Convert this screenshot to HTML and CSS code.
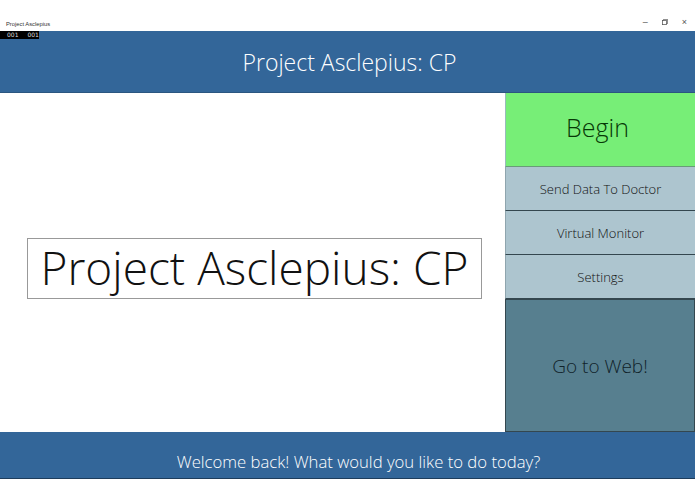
FILE: index.html
```html
<!DOCTYPE html>
<html lang="en">
<head>
    <meta charset="UTF-8">
    <meta name="viewport" content="width=device-width, initial-scale=1.0">
    <title>Project Asclepius</title>
    <link rel="stylesheet" href="styles.css">
</head>
<body>
    <div class="titlebar">
        <span class="window-title">Project Asclepius</span>
        <div class="window-controls">
            <span class="ctrl">&#8211;</span>
            <svg class="ctrl-icon" width="8" height="8" viewBox="0 0 8 8">
                <rect x="0.5" y="2" width="5.5" height="5.5" fill="none" stroke="#555" stroke-width="1"/>
                <path d="M2 2 V0.5 H7.5 V6 H6" fill="none" stroke="#555" stroke-width="1"/>
            </svg>
            <span class="ctrl">&#215;</span>
        </div>
    </div>

    <div class="app">
        <div class="fps">
            <span>001</span>
            <span>001</span>
        </div>

        <header class="app-header">
            <h1>Project Asclepius: CP</h1>
        </header>

        <main class="content">
            <section class="stage">
                <div class="title-box">Project Asclepius: CP</div>
            </section>

            <nav class="menu">
                <button class="btn btn-begin">Begin</button>
                <button class="btn btn-option">Send Data To Doctor</button>
                <button class="btn btn-option">Virtual Monitor</button>
                <button class="btn btn-option">Settings</button>
                <button class="btn btn-web">Go to Web!</button>
            </nav>
        </main>

        <footer class="app-footer">
            <p>Welcome back! What would you like to do today?</p>
        </footer>
    </div>
</body>
</html>
```

FILE: styles.css
```css
:root {
    --primary-color: #336699;
    --begin-color: #77ee77;
    --option-color: #adc5cf;
    --web-color: #577f8f;
    --line-color: #34474f;
    --text-dark: #111;
}

* {
    margin: 0;
    padding: 0;
    box-sizing: border-box;
}

body {
    font-family: 'Open Sans', 'Noto Sans', sans-serif;
    font-weight: 300;
    background-color: white;
    color: var(--text-dark);
    width: 695px;
    height: 494px;
    overflow: hidden;
}

.titlebar {
    height: 31px;
    display: flex;
    justify-content: space-between;
    align-items: flex-end;
    padding: 0 8px 4px 6px;
    font-family: 'Liberation Sans', sans-serif;
    font-weight: 400;
}

.window-title {
    font-size: 5.8px;
    color: #333;
}

.window-controls {
    display: flex;
    align-items: center;
    gap: 14px;
    color: #555;
}

.ctrl {
    font-size: 9px;
}

.ctrl-icon {
    width: 6px;
    height: 6px;
}

.app {
    position: relative;
    display: flex;
    flex-direction: column;
}

.fps {
    position: absolute;
    top: 0;
    left: 0;
    width: 39px;
    height: 8px;
    background-color: #000;
    color: #ddd;
    font-family: 'DejaVu Sans', sans-serif;
    font-weight: 400;
    font-size: 6px;
    line-height: 8px;
    display: flex;
    gap: 9px;
    padding-left: 7px;
}

.app-header {
    height: 62px;
    background-color: var(--primary-color);
    border-bottom: 1px solid #2b5680;
    display: flex;
    align-items: center;
    justify-content: center;
}

.app-header h1 {
    font-size: 23px;
    font-weight: 300;
    color: white;
    padding-left: 4px;
}

.content {
    height: 339px;
    display: flex;
}

.stage {
    flex: 1;
    display: flex;
    align-items: center;
    justify-content: center;
    padding-top: 11px;
    padding-left: 4px;
}

.title-box {
    width: 455px;
    height: 61px;
    border: 1px solid #999;
    font-size: 46px;
    line-height: 56px;
    text-align: center;
    white-space: nowrap;
}

.menu {
    width: 190px;
    display: flex;
    flex-direction: column;
}

.btn {
    font-family: inherit;
    font-weight: 300;
    color: var(--text-dark);
    border: none;
    cursor: pointer;
    text-align: center;
}

.btn-begin {
    height: 74px;
    background-color: var(--begin-color);
    border-left: 1px solid #9bb;
    border-bottom: 1px solid #6a9a7a;
    font-size: 25px;
    color: #063806;
    padding-bottom: 6px;
    padding-right: 6px;
}

.btn-option {
    height: 44px;
    background-color: var(--option-color);
    border-left: 1px solid #8fa5ae;
    border-bottom: 1px solid var(--line-color);
    font-size: 13px;
}

.btn-web {
    flex: 1;
    background-color: var(--web-color);
    border: 1px solid var(--line-color);
    font-size: 19px;
    color: #10222a;
}

.app-footer {
    height: 47px;
    background-color: var(--primary-color);
    border-bottom: 1px solid #1e3d5c;
    display: flex;
    align-items: flex-end;
    justify-content: center;
    padding-bottom: 5px;
}

.app-footer p {
    font-size: 16.7px;
    color: white;
    padding-left: 22px;
}
```
